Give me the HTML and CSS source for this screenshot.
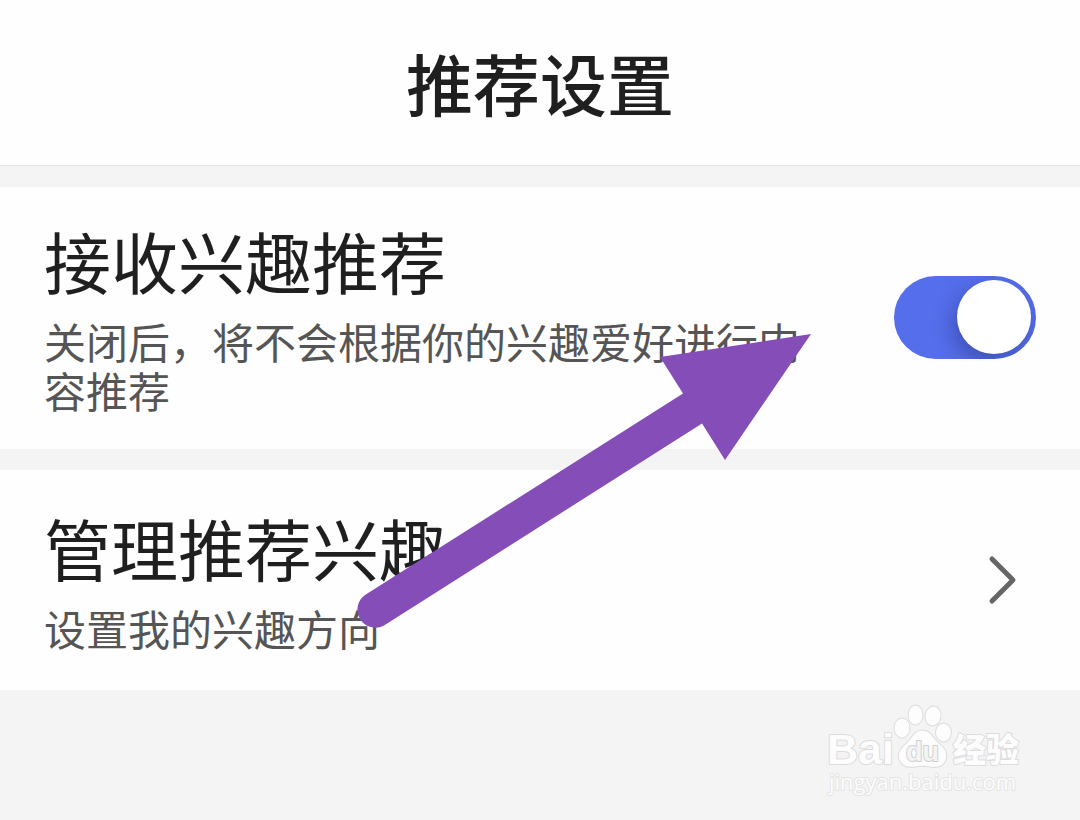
FILE: index.html
```
<!DOCTYPE html>
<html lang="zh-CN">
<head>
  <meta charset="UTF-8">
  <title>推荐设置</title>
  <meta name="viewport" content="width=device-width, initial-scale=1.0">
  <link rel="stylesheet" href="styles.css">
</head>
<body>
  <header class="page-header">
    <h1>推荐设置</h1>
  </header>

  <main class="settings">
    <div class="setting-row">
      <div class="setting-text">
        <label class="setting-title" for="recommend">接收兴趣推荐</label>
        <p class="setting-desc" id="recommend-desc">关闭后，将不会根据你的兴趣爱好进行内容推荐</p>
      </div>
      <input type="checkbox" class="switch" id="recommend" name="recommend" aria-describedby="recommend-desc" checked>
    </div>

    <a class="setting-row" href="#">
      <div class="setting-text">
        <span class="setting-title">管理推荐兴趣</span>
        <p class="setting-desc">设置我的兴趣方向</p>
      </div>
      <svg class="chevron" viewBox="0 0 66 66" aria-hidden="true">
        <path d="M22 13 L43 34 L22 55"/>
      </svg>
    </a>

    <!-- Flèche posée par-dessus les deux lignes -->
    <svg class="arrow" viewBox="0 0 456 296" aria-hidden="true">
      <path d="M456 0 L305 23 L328 59.500 L10 261 A18 18 0 0 0 29 291.500 L347 89.500 L370 126 Z"/>
    </svg>
  </main>

  <footer class="page-footer">
    <svg class="watermark" viewBox="0 0 200 100" role="img" aria-label="Baidu 经验">
      <g class="mark">
        <text class="mark-latin" x="0" y="62">Bai</text>
        <ellipse cx="75" cy="26" rx="7.500" ry="9.500"/>
        <ellipse cx="88.500" cy="13" rx="7" ry="9.500"/>
        <ellipse cx="106" cy="14" rx="7.500" ry="9.500" transform="rotate(10 106 14)"/>
        <ellipse cx="116.500" cy="30.500" rx="7.500" ry="9"/>
        <path d="M95.500 28.500 C103 28.500 105 35 111 41 C117 46 120 49 119 56 C117 65 109 65.500 103 64.500 C97 63.500 93 63.500 88 64.500 C81 65.500 74 64 72 56 C71 49 75 46 80 41 C86 35 88 28.500 95.500 28.500 Z"/>
        <text class="mark-du" x="79" y="59">du</text>
        <text class="mark-cjk" x="126" y="60">经验</text>
        <text class="mark-url" x="2" y="88">jingyan.baidu.com</text>
      </g>
    </svg>
  </footer>
</body>
</html>
```
FILE: styles.css
```
:root {
  --page: #f4f4f4;
  --card: #fefefe;
  --text: #1f1f1f;
  --muted: #555;
  --primary: #556eeb;
  --arrow: #854db8;
}
* {
  box-sizing: border-box;
}
body {
  margin: 0;
  min-height: 100vh;
  display: flex;
  flex-direction: column;
  background: var(--page);
  color: var(--text);
  font-family: "Noto Sans CJK SC", "Noto Sans", sans-serif;
}

.page-header {
  padding: 32px 44px 33px;
  background: var(--card);
  border-bottom: 1px solid #e2e2e2;
  text-align: center;
}
h1 {
  margin: 0;
  font-size: 67px;
  line-height: 100px;
  font-weight: 500;
}

.settings {
  position: relative;
  display: flex;
  flex-direction: column;
  gap: 21px;
  padding-top: 21px;
}
.setting-row {
  display: flex;
  align-items: center;
  gap: 60px;
  min-height: 220px;
  padding: 33px 44px 35px;
  background: var(--card);
  color: inherit;
  text-decoration: none;
}
.setting-text {
  flex: 1;
  display: flex;
  flex-direction: column;
  gap: 16px;
}
.setting-title {
  font-size: 67px;
  line-height: 80px;
}
.setting-desc {
  margin: 0;
  font-size: 42px;
  line-height: 49px;
  color: var(--muted);
}

.switch {
  appearance: none;
  flex: none;
  width: 142px;
  height: 83px;
  margin: 0;
  padding: 5px;
  display: flex;
  align-items: center;
  border-radius: 42px;
  background: #ccc;
  overflow: hidden;
  cursor: pointer;
}
.switch::before {
  content: "";
  width: 74px;
  height: 74px;
  border-radius: 50%;
  background: #fff;
  box-shadow: -4px 8px 20px rgba(20, 30, 90, 0.35);
}
.switch:checked {
  justify-content: flex-end;
  background: var(--primary);
}

.chevron {
  flex: none;
  width: 66px;
  height: 66px;
  fill: none;
  stroke: #666;
  stroke-width: 5;
  stroke-linecap: round;
  stroke-linejoin: round;
}

.arrow {
  position: absolute;
  left: 355px;
  top: 168px;
  width: 456px;
  height: 296px;
  fill: var(--arrow);
  pointer-events: none;
}

/* Filigrane en bas à droite */
.page-footer {
  display: flex;
  justify-content: flex-end;
  padding: 12px 53px 16px;
}
.watermark {
  width: 200px;
  height: 100px;
}
.mark {
  fill: #fdfdfd;
  stroke: #dcdcdc;
  stroke-width: 2;
  stroke-linejoin: round;
  paint-order: stroke;
}
.mark-latin {
  font: 700 43px "Liberation Sans", sans-serif;
}
.mark-du {
  font: 700 27px "Liberation Sans", sans-serif;
  fill: #f4f4f4;
  stroke: #d0d0d0;
}
.mark-cjk {
  font: 900 33px "Noto Sans CJK SC", sans-serif;
}
.mark-url {
  font: 400 22px "Open Sans", sans-serif;
  stroke: #e4e4e4;
}
```
